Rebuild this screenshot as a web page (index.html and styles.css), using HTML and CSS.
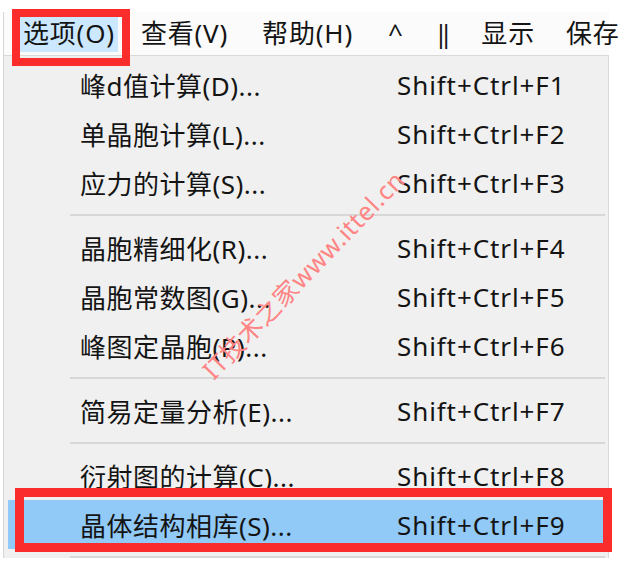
FILE: index.html
```
<!DOCTYPE html>
<html lang="zh-CN">
<head>
    <meta charset="UTF-8">
    <title>选项菜单</title>
    <link rel="stylesheet" href="styles.css">
</head>
<body>
    <div class="screen">
        <div class="window">
            <div class="menubar">
                <div class="menu-item active">选项(O)</div>
                <div class="menu-item">查看(V)</div>
                <div class="menu-item help">帮助(H)</div>
                <div class="menu-item caret">^</div>
                <div class="menu-item bars">||</div>
                <div class="menu-item">显示</div>
                <div class="menu-item save">保存</div>
            </div>

            <!-- dropdown of the 选项 menu -->
            <div class="dropdown">
                <div class="row"><span class="label">峰d值计算(D)...</span><span class="key">Shift+Ctrl+F1</span></div>
                <div class="row"><span class="label">单晶胞计算(L)...</span><span class="key">Shift+Ctrl+F2</span></div>
                <div class="row"><span class="label">应力的计算(S)...</span><span class="key">Shift+Ctrl+F3</span></div>
                <div class="sep"></div>
                <div class="row"><span class="label">晶胞精细化(R)...</span><span class="key">Shift+Ctrl+F4</span></div>
                <div class="row"><span class="label">晶胞常数图(G)...</span><span class="key">Shift+Ctrl+F5</span></div>
                <div class="row"><span class="label">峰图定晶胞(P)...</span><span class="key">Shift+Ctrl+F6</span></div>
                <div class="sep"></div>
                <div class="row"><span class="label">简易定量分析(E)...</span><span class="key">Shift+Ctrl+F7</span></div>
                <div class="sep"></div>
                <div class="row"><span class="label">衍射图的计算(C)...</span><span class="key">Shift+Ctrl+F8</span></div>
                <div class="row hover"><span class="label">晶体结构相库(S)...</span><span class="key">Shift+Ctrl+F9</span></div>
                <div class="sep"></div>
            </div>
        </div>

        <!-- annotation boxes and watermark on top of the screenshot -->
        <div class="mark mark-menu"></div>
        <div class="mark mark-item"></div>
        <div class="watermark">IT技术之家www.ittel.cn</div>
    </div>
</body>
</html>
```

FILE: styles.css
```
body {
    margin: 0;
    background-color: #ffffff;
    font-family: "Noto Sans", "Noto Sans CJK SC", sans-serif;
    color: #141414;
}

.screen {
    position: relative;
    width: 622px;
    height: 568px;
    overflow: hidden;
    padding-top: 12px;
    box-sizing: border-box;
}

.window {
    margin-left: 3px;
    width: 605px;
    border-left: 1px solid #d6d6d6;
}

.menubar {
    display: flex;
    gap: 20px;
    height: 43px;
    padding: 3px 0 3px 16px;
    box-sizing: border-box;
    background-color: #fbfbfb;
    font-size: 26px;
    letter-spacing: 0.8px;
}

.menu-item {
    padding: 0 3px;
    line-height: 37px;
    white-space: nowrap;
}

.menu-item.active {
    background-color: #cce8ff;
}

.menu-item.help {
    margin-left: 8px;
}

.menu-item.caret {
    margin-left: 9px;
    margin-right: 4px;
}

.menu-item.bars {
    letter-spacing: -9px;
    margin-right: 11px;
}

.menu-item.save {
    margin-left: 5px;
}

.dropdown {
    border-top: 1px solid #d9d9d9;
    border-right: 1px solid #d9d9d9;
    background-color: #f0f0f0;
    padding-top: 4px;
    font-size: 26px;
}

.row {
    display: grid;
    grid-template-columns: 317px auto;
    align-items: center;
    height: 49px;
    margin: 0 4px;
    padding-left: 72px;
    white-space: nowrap;
}

.label {
    letter-spacing: 0.5px;
}

.key {
    letter-spacing: 0.9px;
}

.row.hover {
    background-color: #91c9f7;
}

.sep {
    height: 2px;
    margin: 7px 3px 7px 66px;
    background-color: #d7d7d7;
}

.mark {
    position: absolute;
    border: 9px solid #fb2c2c;
    box-sizing: border-box;
}

.mark-menu {
    left: 12px;
    top: 9px;
    width: 118px;
    height: 57px;
    border-width: 8px;
}

.mark-item {
    left: 15px;
    top: 488px;
    width: 597px;
    height: 64px;
}

.watermark {
    position: absolute;
    left: 216px;
    top: 358px;
    font-size: 25px;
    line-height: 25px;
    letter-spacing: 0.6px;
    color: #ff8484;
    white-space: nowrap;
    transform: rotate(-46deg);
    transform-origin: 0 100%;
}
```
